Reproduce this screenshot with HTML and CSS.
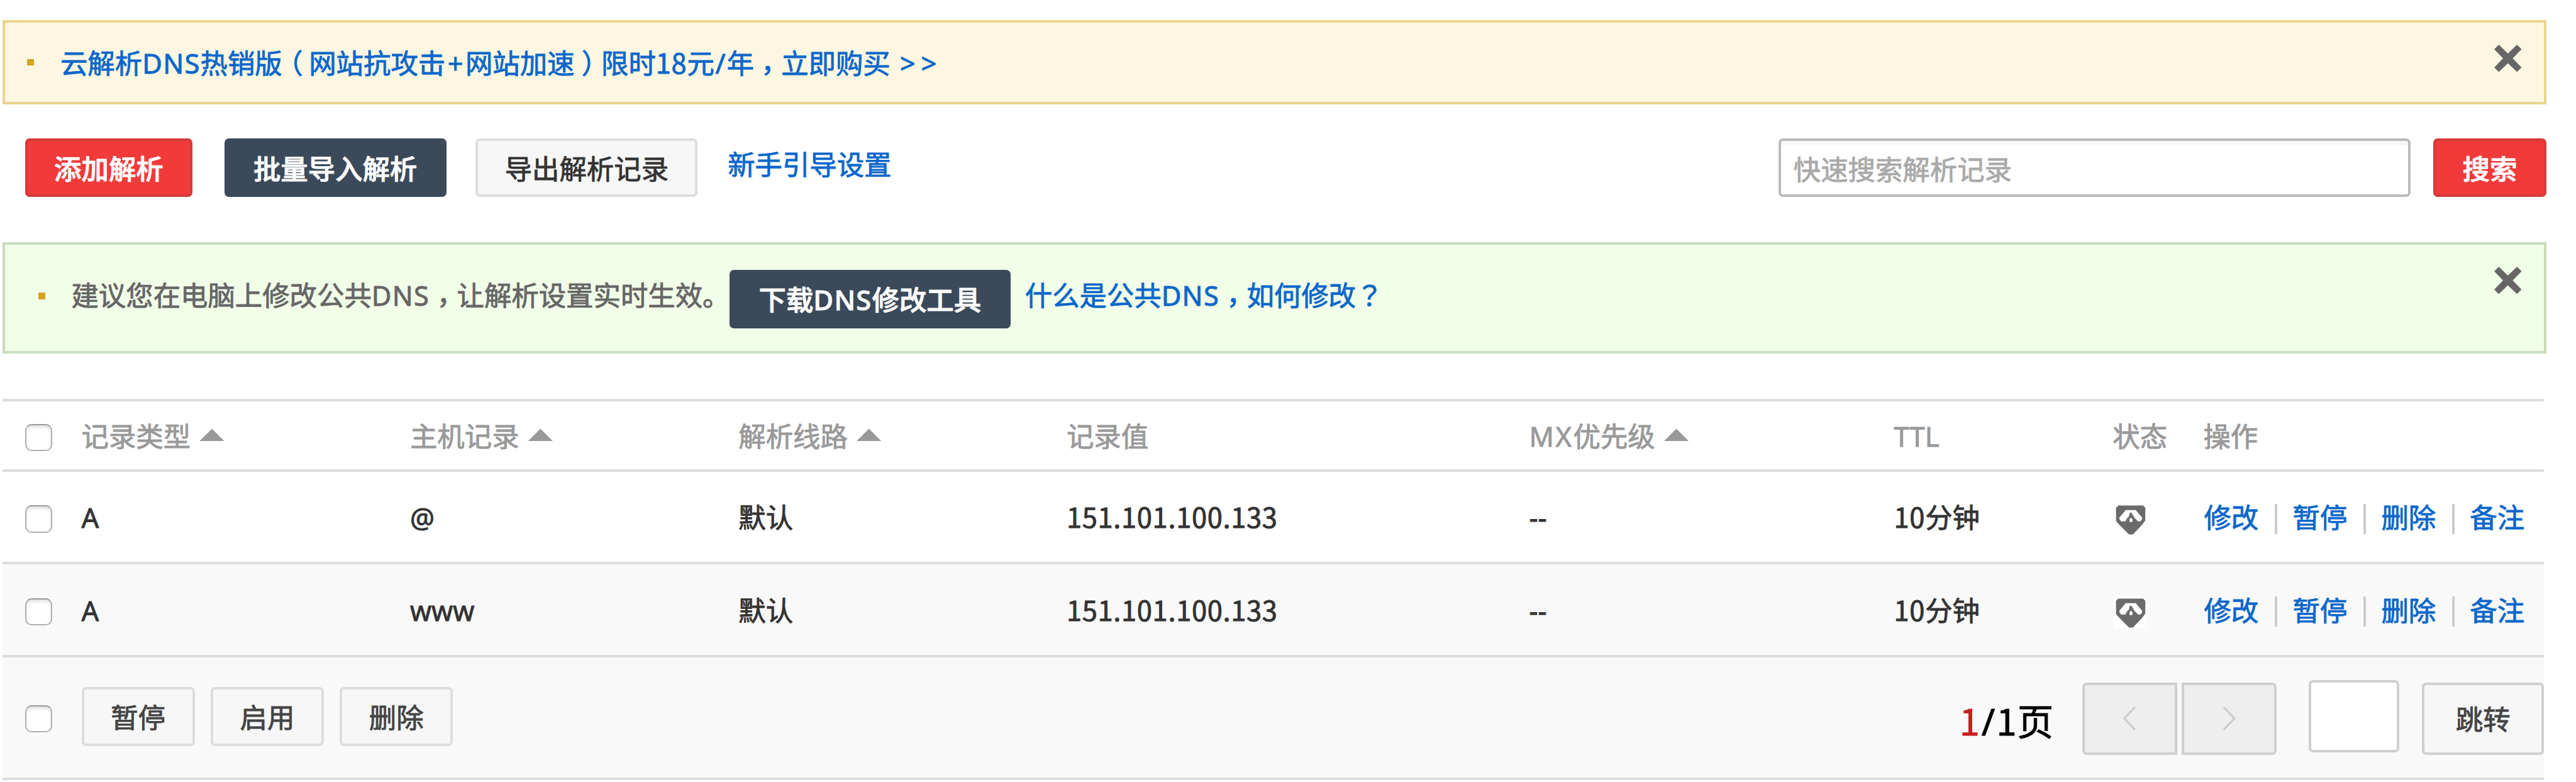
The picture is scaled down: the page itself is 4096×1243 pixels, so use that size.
FILE: index.html
```
<!DOCTYPE html>
<html lang="zh-CN">
<head>
<meta charset="utf-8">
<title>DNS 解析记录</title>
<link rel="stylesheet" href="styles.css">
</head>
<body>
<svg class="defs" width="0" height="0">
  <symbol id="close" viewBox="0 0 48 48"><path d="M8 0 24 15.500 40 0 48 8 32.500 24 48 40 40 48 24 32.500 8 48 0 40 15.500 24 0 8z" fill="#666"/></symbol>
  <symbol id="shield" viewBox="0 0 56 56">
    <rect width="56" height="56" fill="#fff"/>
    <path d="M8 4H52L56 8V30L50 38 34 55H27L10 38 4 31V8z" fill="#6b6b6b"/>
    <path d="M21 12H39L44 18 50 25V29L47 32H43L37 26 31 16 28 17 27 23 23 27 21 32H13L10 28V25L16 18z" fill="#fff"/>
    <path d="M30 25 33 28V33H28V28z" fill="#fff"/>
  </symbol>
</svg>
<main class="page">
  <section class="notice notice-promo">
    <i class="bullet"></i>
    <a class="text link" href="#">云解析<span class="lat">DNS</span>热销版<span class="paren">（</span>网站抗攻击<span class="op">+</span>网站加速<span class="paren">）</span>限时<span class="num">18</span>元<span class="sl">/</span>年<span class="mid cm" lang="zh-TW">，</span>立即购买 <span class="gt">&gt;&gt;</span></a>
    <svg class="close"><use href="#close"/></svg>
  </section>

  <section class="toolbar">
    <button class="btn btn-red">添加解析</button>
    <button class="btn btn-dark">批量导入解析</button>
    <button class="btn btn-light">导出解析记录</button>
    <a class="text link guide" href="#">新手引导设置</a>
    <div class="search">快速搜索解析记录</div>
    <button class="btn btn-red btn-search">搜索</button>
  </section>

  <section class="notice notice-tip">
    <i class="bullet"></i>
    <span class="text">建议您在电脑上修改公共<span class="lat">DNS</span><span class="mid cm" lang="zh-TW">，</span>让解析设置实时生效。</span>
    <button class="btn btn-dark btn-tool"><span>下载<span class="lat">DNS</span>修改工具</span></button>
    <a class="text link what" href="#">什么是公共<span class="lat">DNS</span><span class="mid cm" lang="zh-TW">，</span>如何修改<span class="mid" lang="zh-TW">？</span></a>
    <svg class="close"><use href="#close"/></svg>
  </section>

  <section class="table">
    <div class="row head">
      <span><i class="check"></i></span>
      <span>记录类型<i class="sort"></i></span>
      <span>主机记录<i class="sort"></i></span>
      <span>解析线路<i class="sort"></i></span>
      <span>记录值</span>
      <span><span class="mx">MX</span>优先级<i class="sort"></i></span>
      <span>TTL</span>
      <span>状态</span>
      <span>操作</span>
    </div>
    <div class="row">
      <span><i class="check"></i></span>
      <span>A</span>
      <span>@</span>
      <span>默认</span>
      <span><span><span class="num">151.101.100.133</span></span></span>
      <span>--</span>
      <span><span><span class="num">10</span>分钟</span></span>
      <span><svg class="shield"><use href="#shield"/></svg></span>
      <span class="actions"><a href="#">修改</a><i></i><a href="#">暂停</a><i></i><a href="#">删除</a><i></i><a href="#">备注</a></span>
    </div>
    <div class="row alt">
      <span><i class="check"></i></span>
      <span>A</span>
      <span>www</span>
      <span>默认</span>
      <span><span><span class="num">151.101.100.133</span></span></span>
      <span>--</span>
      <span><span><span class="num">10</span>分钟</span></span>
      <span><svg class="shield"><use href="#shield"/></svg></span>
      <span class="actions"><a href="#">修改</a><i></i><a href="#">暂停</a><i></i><a href="#">删除</a><i></i><a href="#">备注</a></span>
    </div>
    <div class="foot">
      <i class="check"></i>
      <div class="bulk">
        <button class="btn btn-light">暂停</button>
        <button class="btn btn-light">启用</button>
        <button class="btn btn-light">删除</button>
      </div>
      <div class="pager">
        <span class="pages"><span class="num cur">1</span><span class="sl">/</span><span class="num">1</span>页</span>
        <span class="nav prev"><svg viewBox="0 0 24 42"><path d="M22 1 3 21 22 41"/></svg></span>
        <span class="nav next"><svg viewBox="0 0 24 42"><path d="M2 1 21 21 2 41"/></svg></span>
        <span class="goto"></span>
        <button class="jump">跳转</button>
      </div>
    </div>
  </section>
</main>
</body>
</html>
```
FILE: styles.css
```
* { box-sizing: border-box; }

body {
  margin: 0;
  background: #fff;
  color: #333;
  font: 43.4px/60px "Noto Sans", "Noto Sans CJK SC", sans-serif;
  -webkit-text-stroke: .9px currentColor;
}

.defs { display: block; height: 0; }
i { display: block; flex: none; font-style: normal; }
a { color: #0b67cb; text-decoration: none; }
button { font: inherit; margin: 0; padding: 0; }

.page { padding: 32.4px 47px 0 3.6px; }
.text { white-space: nowrap; padding-top: 3px; }

/* Latin runs and wide punctuation inside Chinese text */
.lat { letter-spacing: 1.3px; }
.mx { letter-spacing: 2.6px; }
.num { font-family: "Noto Sans CJK SC", sans-serif; letter-spacing: .016em; line-height: 0; }
.paren { font-feature-settings: "halt"; margin: 0 .22em 0 .26em; }
.mid { font-family: "Noto Sans CJK TC", sans-serif; line-height: 0; }
.cm { vertical-align: -.25em; }
.op { margin: 0 .08em; }
.sl { margin: 0 .04em; }
.gt { letter-spacing: .2em; margin-left: .09em; }

.notice {
  display: flex;
  align-items: center;
  width: 4045.4px;
  border: 4px solid;
}
.notice-promo { height: 133.3px; background: #fdf7e1; border-color: #ebd48f; }
.notice-promo .bullet { margin: 0 42px 0 35.6px; }
.notice-tip {
  height: 176.5px;
  margin-top: 72.1px;
  background: #f1fee8;
  border-color: #c9dcbb;
  color: #666;
}
.notice-tip .bullet { margin: -7px 41.5px 0 53.6px; }
.notice-tip .text { margin-top: -10px; }
.notice-tip .btn { margin: 3.500px 0 0 0; }
.notice-tip .what { margin-left: 23px; }
.notice-tip > span.text { width: 1046.500px; }
.bullet { width: 10.8px; height: 10.8px; background: #d3a521; }
.close { width: 43.4px; height: 43.4px; margin: -12.5px 36px 0 auto; flex: none; }
.notice-tip .close { margin-top: -56px; }

.btn {
  display: flex;
  justify-content: center;
  align-items: center;
  flex: none;
  height: 93.7px;
  border: 4px solid;
  border-radius: 7px;
  padding-top: 4px;
  white-space: nowrap;
}
.btn-red { width: 266.6px; background: #f13a39; border-color: #d63a3a; color: #fff; font-weight: 500; }
.btn-dark { width: 353px; background: #3b4a5b; border-color: #3b4a5b; color: #fff; font-weight: 500; }
.btn-light { width: 353px; background: #f7f7f7; border-color: #ddd; color: #333; }
.btn-search { width: 180.2px; }
.btn-tool { width: 446.7px; }

.toolbar { display: flex; align-items: flex-start; width: 4045.4px; margin-top: 54px; padding-left: 36px; }
.toolbar .btn-dark { margin: 0 46.8px 0 50.4px; }
.guide { margin: 9px 0 0 47.8px; }
.search {
  width: 1005px;
  height: 93.7px;
  margin: 0 36px 0 auto;
  padding: 16px 20px 0;
  border: 4px solid #bbb;
  border-radius: 7px;
  box-shadow: inset 0 7px 0 #f7f7f7;
  color: #a9a9a9;
}

.table { width: 4041.8px; margin-top: 72px; border-top: 4px solid #ddd; }
.row {
  display: grid;
  grid-template-columns: 126px 522.4px 522.3px 521.7px 735.6px 580px 347.8px 144.1px 1fr;
  align-items: center;
  height: 147.7px;
  padding-top: 3px;
  border-bottom: 4px solid #ddd;
  white-space: nowrap;
}
.row > span { display: flex; align-items: center; }
.head { height: 111.7px; padding-top: 4px; color: #999; }
.alt { background: #f9f9f9; }
.check {
  width: 43.2px;
  height: 43.2px;
  margin: 4px 0 0 36px;
  border: 2px solid #b0b0b0;
  border-top-color: #999;
  border-radius: 10px;
  background: #fff;
  box-shadow: inset 0 4px 4px #e4e4e4;
}
.sort {
  width: 39.6px;
  height: 19.8px;
  margin: -5px 0 0 14px;
  background: #999;
  clip-path: polygon(50% 0, 100% 100%, 0 100%);
}
.shield { width: 50.4px; height: 50.4px; margin: 5px 0 0 2px; }
.actions { padding-left: 1px; }
.actions i { width: 4px; height: 48px; margin: 3px 24.2px 0 26px; background: #ccc; }

.foot {
  display: flex;
  align-items: flex-start;
  height: 194.5px;
  border-bottom: 4px solid #ddd;
  background: #f9f9f9;
}
.foot .check { margin-top: 75.6px; }
.bulk { display: flex; gap: 25.2px; margin: 46.8px 0 0 46.8px; }
.bulk .btn { width: 180.1px; color: #444; }
.pager { display: flex; align-items: flex-start; margin-left: auto; padding-top: 39.6px; }
.pages { font-size: 57.64px; line-height: 80px; margin: 22px 45.500px 0 0; color: #000; white-space: nowrap; }
.cur { color: #c81e1e; }
.nav {
  display: flex;
  align-items: center;
  justify-content: center;
  width: 151.3px;
  height: 115.3px;
  border: 4px solid #cfcfcf;
  background: #eee;
}
.prev { border-radius: 7px 0 0 7px; margin-right: 7.2px; }
.next { border-radius: 0 7px 7px 0; }
.nav svg { width: 21.6px; height: 37.8px; fill: none; stroke: #ccc; stroke-width: 3.5; }
.goto {
  width: 144.1px;
  height: 115.3px;
  margin: -3.6px 36px 0 50.4px;
  border: 4px solid #cfcfcf;
  border-radius: 7px;
  background: #fff;
}
.jump {
  width: 194.5px;
  height: 115.3px;
  padding-top: 4px;
  border: 4px solid #cfcfcf;
  border-radius: 7px;
  background: #f7f7f7;
  color: #444;
}
```
